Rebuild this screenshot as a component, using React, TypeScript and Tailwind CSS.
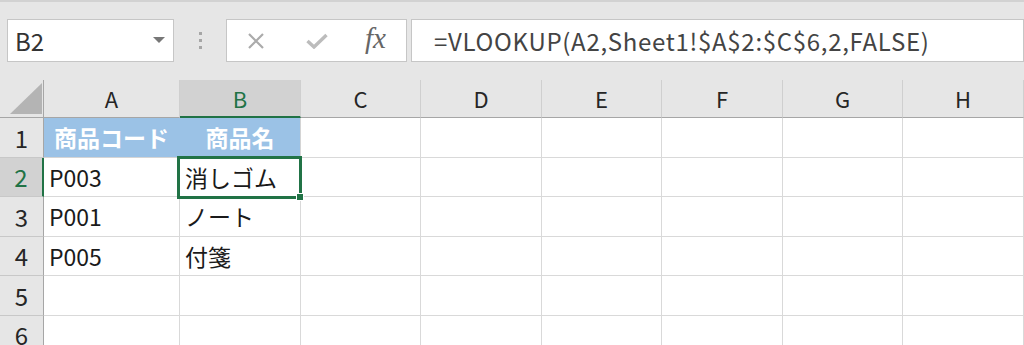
import React from "react";

const font = "font-['Noto_Sans_CJK_JP','Noto_Sans',sans-serif]";

const cols = ["A", "B", "C", "D", "E", "F", "G", "H"];
const rowHeights = ["h-[40px]", "h-[39px]", "h-[40px]", "h-[39px]", "h-[40px]", "h-[39px]"];

const data: Record<string, string> = {
    A2: "P003",
    A3: "P001",
    A4: "P005",
    B2: "消しゴム",
    B3: "ノート",
    B4: "付箋",
};

export default function App() {
    return (
        <div className={`w-[1024px] h-[345px] overflow-hidden bg-[#e6e6e6] ${font}`}>

            {/* FORMULA BAR */}
            <div className="h-[80px] border-t-2 border-[#d2d2d2] flex items-start pt-[17px] pl-[7px]">
                <div className="w-[167px] h-[43px] bg-white border border-[#c6c6c6] flex items-center justify-between pl-[7px] pr-[8px]">
                    <span className="text-[24px] text-[#333] leading-none">B2</span>
                    <svg width="12" height="7" viewBox="0 0 12 7">
                        <polygon points="0,0 12,0 6,6" fill="#777" />
                    </svg>
                </div>

                <div className="w-[52px] h-[43px] flex flex-col items-center justify-center gap-[4px]">
                    <div className="w-[3px] h-[3px] bg-[#a6a6a6]" />
                    <div className="w-[3px] h-[3px] bg-[#a6a6a6]" />
                    <div className="w-[3px] h-[3px] bg-[#a6a6a6]" />
                </div>

                <div className="w-[181px] h-[43px] bg-white border border-[#c6c6c6] flex items-center">
                    <svg width="22" height="16" viewBox="0 0 22 16" className="ml-[18px]">
                        <path d="M4 1 L18 15 M18 1 L4 15" stroke="#ababab" strokeWidth="2.2" fill="none" />
                    </svg>
                    <svg width="22" height="16" viewBox="0 0 22 16" className="ml-[39px]">
                        <path d="M1.5 8 L8 14 L20.5 2" stroke="#bcbcbc" strokeWidth="3.4" fill="none" />
                    </svg>
                    <span className="ml-[37px] text-[29px] leading-none italic text-[#666] font-['Liberation_Serif',serif] -mt-[4px]">fx</span>
                </div>

                <div className="ml-[4px] flex-1 h-[43px] bg-white border border-[#c6c6c6] flex items-center pl-[22px]">
                    <span className="text-[24px] text-[#444] leading-none whitespace-nowrap tracking-[0.7px]">=VLOOKUP(A2,Sheet1!$A$2:$C$6,2,FALSE)</span>
                </div>
            </div>

            {/* GRID */}
            <div className="grid grid-cols-[44px_136px_121px_120px_121px_120px_121px_120px_121px]">
                {/* HEADER ROW */}
                <div className="h-[38px] border-r border-b border-[#a6a6a6] flex items-end">
                    <svg width="43" height="37" viewBox="0 0 43 37">
                        <polygon points="10,34 42,34 42,3" fill="#b4b4b4" />
                    </svg>
                </div>
                {cols.map((c) => (
                    <div
                        key={c}
                        className={`h-[38px] flex items-center justify-center text-[22px] border-r border-r-[#cfcfcf] ${
                            c === "B"
                                ? "bg-[#d2d2d2] text-[#217346] border-b-2 border-b-[#217346]"
                                : "text-[#262626] border-b border-b-[#a6a6a6]"
                        }`}
                    >
                        {c}
                    </div>
                ))}

                {/* DATA ROWS */}
                {rowHeights.map((h, i) => {
                    const r = i + 1;
                    return (
                        <React.Fragment key={r}>
                            <div
                                className={`${h} flex items-center justify-center text-[24px] border-b border-b-[#c8c8c8] ${
                                    r === 2
                                        ? "bg-[#d2d2d2] text-[#217346] border-r-2 border-r-[#217346]"
                                        : "text-[#262626] border-r border-r-[#a6a6a6]"
                                }`}
                            >
                                {r}
                            </div>
                            {cols.map((c) => {
                                const id = `${c}${r}`;
                                if (r === 1 && (c === "A" || c === "B")) {
                                    return (
                                        <div
                                            key={id}
                                            className={`${h} bg-[#9bc2e6] border-b border-b-[#d4d4d4] ${
                                                c === "A" ? "border-r border-r-[#9bc2e6]" : "border-r border-r-[#d4d4d4]"
                                            } flex items-center justify-center text-[23px] font-bold text-white`}
                                        >
                                            {c === "A" ? "商品コード" : "商品名"}
                                        </div>
                                    );
                                }
                                return (
                                    <div
                                        key={id}
                                        className={`${h} relative bg-white border-r border-b border-[#d9d9d9] flex items-center pl-[5px] text-[23px] text-[#1a1a1a]`}
                                    >
                                        {data[id]}
                                        {id === "B2" && (
                                            <>
                                                <div className="absolute z-10 -left-[3px] -top-[2px] -right-[2px] -bottom-[3px] border-[3px] border-[#217346]" />
                                                <div className="absolute z-20 -right-[4px] -bottom-[5px] w-[8px] h-[8px] bg-[#217346] border border-white" />
                                            </>
                                        )}
                                    </div>
                                );
                            })}
                        </React.Fragment>
                    );
                })}
            </div>
        </div>
    );
}
